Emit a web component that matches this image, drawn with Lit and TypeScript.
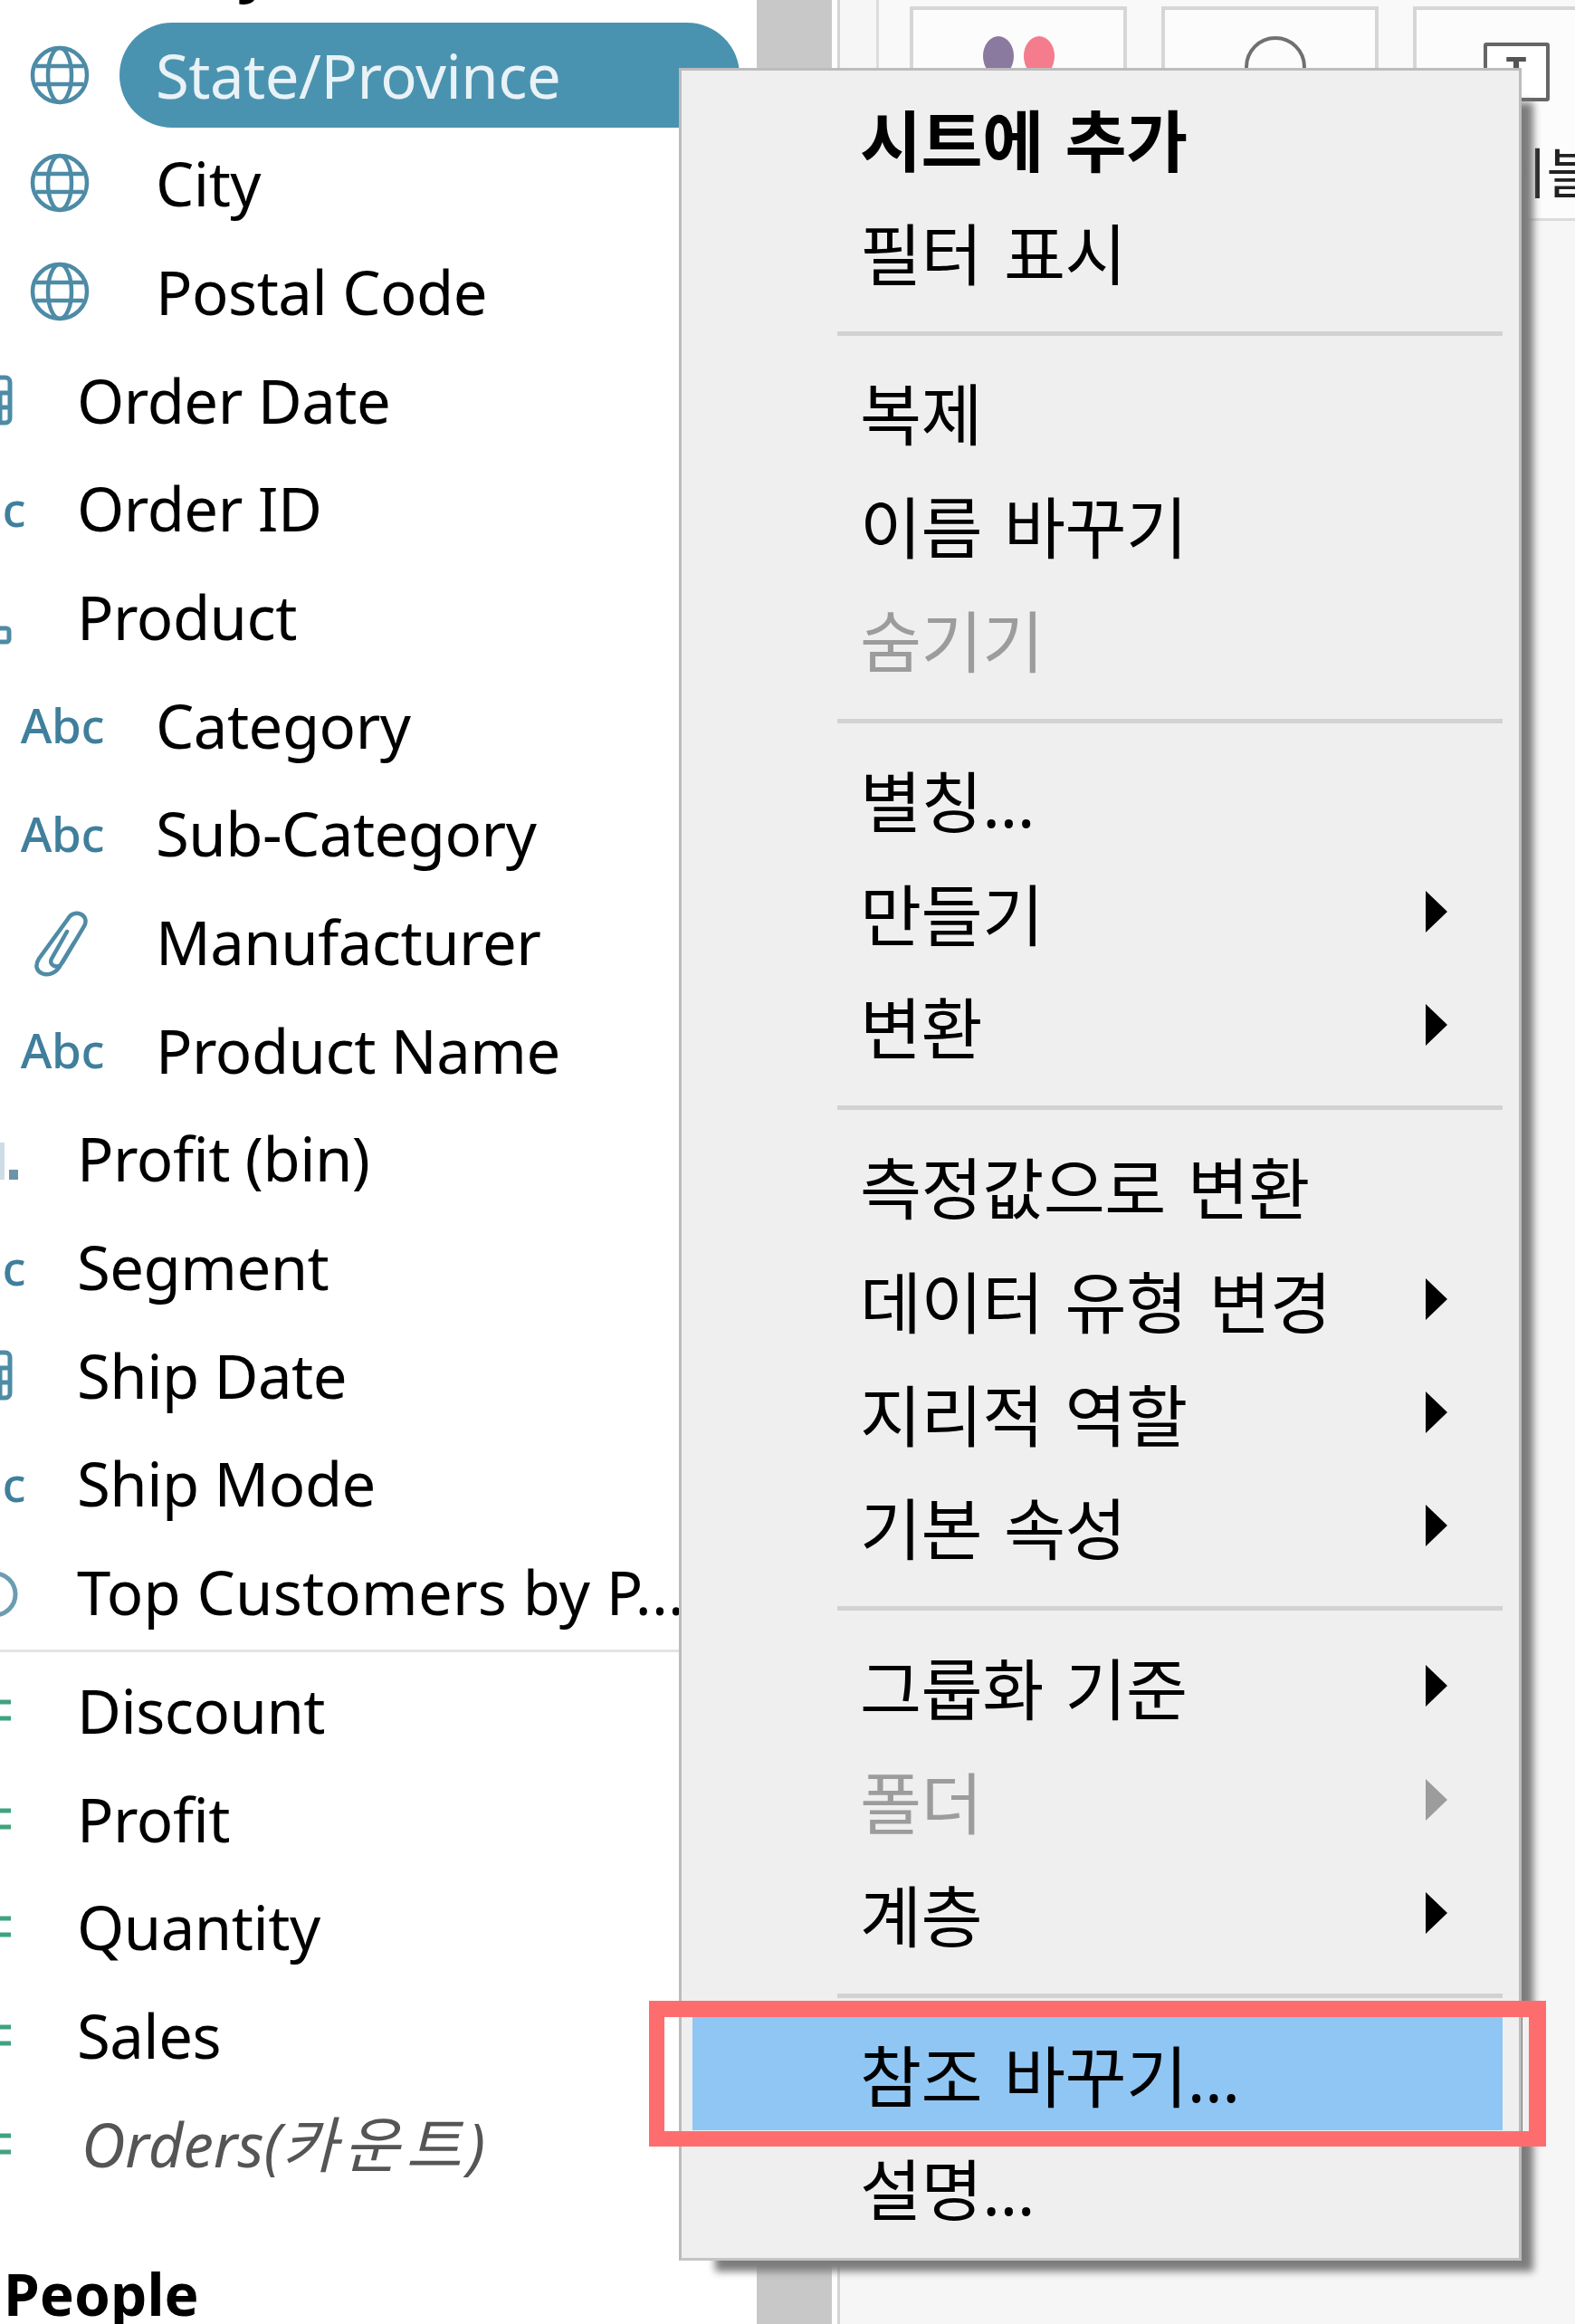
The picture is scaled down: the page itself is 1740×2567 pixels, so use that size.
import { LitElement, html, css, svg } from "lit";
import { customElement } from "lit/decorators.js";

type Kind = "globe" | "abc" | "cal" | "hier" | "clip" | "bin" | "set" | "num";
interface Row { t: string; k: Kind; child?: boolean; sel?: boolean; it?: boolean; cut?: boolean; wide?: boolean; }

const TOP: Row[] = [
  { t: "Country", k: "globe", cut: true },
  { t: "State/Province", k: "globe", child: true, sel: true },
  { t: "City", k: "globe", child: true },
  { t: "Postal Code", k: "globe", child: true },
  { t: "Order Date", k: "cal" },
  { t: "Order ID", k: "abc" },
  { t: "Product", k: "hier" },
  { t: "Category", k: "abc", child: true },
  { t: "Sub-Category", k: "abc", child: true },
  { t: "Manufacturer", k: "clip", child: true },
  { t: "Product Name", k: "abc", child: true },
  { t: "Profit (bin)", k: "bin" },
  { t: "Segment", k: "abc" },
  { t: "Ship Date", k: "cal" },
  { t: "Ship Mode", k: "abc" },
  { t: "Top Customers by P...", k: "set", wide: true },
];
const MEASURES: Row[] = [
  { t: "Discount", k: "num" },
  { t: "Profit", k: "num" },
  { t: "Quantity", k: "num" },
  { t: "Sales", k: "num" },
  { t: "Orders(카운트)", k: "num", it: true },
];

interface Item { t: string; bold?: boolean; off?: boolean; sub?: boolean; hot?: boolean; }
const MENU: Item[][] = [
  [{ t: "시트에 추가", bold: true }, { t: "필터 표시" }],
  [{ t: "복제" }, { t: "이름 바꾸기" }, { t: "숨기기", off: true }],
  [{ t: "별칭..." }, { t: "만들기", sub: true }, { t: "변환", sub: true }],
  [{ t: "측정값으로 변환" }, { t: "데이터 유형 변경", sub: true }, { t: "지리적 역할", sub: true }, { t: "기본 속성", sub: true }],
  [{ t: "그룹화 기준", sub: true }, { t: "폴더", off: true, sub: true }, { t: "계층", sub: true }],
  [{ t: "참조 바꾸기...", hot: true }, { t: "설명..." }],
];

const icon = (k: Kind) => {
  if (k === "abc") return html`<span class="abc">Abc</span>`;
  const body = {
    globe: svg`<g fill="none" stroke="#4d8ba6" stroke-width="4.5">
      <ellipse cx="33" cy="33" rx="30" ry="30"/><ellipse cx="33" cy="33" rx="13" ry="30"/>
      <path d="M7 23H59M7 43H59"/></g>`,
    cal: svg`<g fill="none" stroke="#4d8ba6" stroke-width="5">
      <rect x="14" y="8" width="51" height="50" rx="5"/><path d="M14 25H65M14 41H65M32 25V58M54 25V58"/></g>`,
    hier: svg`<g fill="none" stroke="#4d8ba6" stroke-width="5">
      <rect x="4" y="4" width="22" height="16"/><path d="M15 20V54H48"/><rect x="48" y="46" width="16" height="15" rx="3"/></g>`,
    clip: svg`<path fill="none" stroke="#4f8ba5" stroke-width="4.5" stroke-linecap="round" d="M41 22 L24 52 C20 60 32 64 36 56 L60 16 C67 3 48 -4 42 8 L10 52 C0 68 22 76 32 62 L49 34"/>`,
    bin: svg`<path fill="#cddde5" d="M54 16h5v41h-5z"/><path fill="#6c94a8" d="M64 46h10v11H64z"/><path fill="#8fb0c0" d="M14 40h10v17H14zM28 26h10v31H28zM42 16h8v41h-8z"/>`,
    set: svg`<g fill="none" stroke="#6c9cb2" stroke-width="5"><circle cx="24" cy="36" r="23"/><circle cx="48" cy="36" r="23"/></g>`,
    num: svg`<path fill="none" stroke="#3fa37e" stroke-width="5" d="M4 24H66M4 42H66M26 10L20 56M46 10L40 56"/>`,
  }[k];
  return html`<svg class="ico" viewBox="0 0 66 66" width="66" height="66">${body}</svg>`;
};

@customElement("app-root")
export class AppRoot extends LitElement {
  static styles = css`
    :host { display: block; width: 1740px; height: 2567px; position: relative; overflow: hidden; background: #fff; filter: blur(0.7px);
      font-family: "Noto Sans", "Noto Sans CJK KR", sans-serif; color: #000; }
    .shell { display: flex; height: 100%; }
    .fields { width: 836px; flex: none; overflow: hidden; }
    .list { margin-top: -97px; }
    .row { height: 119.7px; display: flex; align-items: center; font-size: 67px; letter-spacing: -0.5px; white-space: nowrap; }
    .parent { margin-left: -87px; }
    .cell { width: 132px; flex: none; display: flex; justify-content: center; align-items: center; }
    .ico { display: block; flex: none; overflow: visible; }
    .abc { font-size: 53px; font-weight: 500; color: #3f7f9c; letter-spacing: -0.4px; margin-left: 6px; }
    .label { flex: 1; min-width: 0; height: 116px; line-height: 116px; margin-right: 19px; padding-left: 40px; }
    .sel { background: #4a93b0; color: #e9f2f6; border-radius: 58px; }
    .it { font-style: italic; color: #555; padding-left: 45px; letter-spacing: 0; }
    .it span { letter-spacing: 7px; }
    .cut { font-weight: 700; letter-spacing: -9px; }
    .wide { letter-spacing: 0.2px; }
    .rule { height: 11px; display: flex; align-items: center; }
    .rule i { display: block; width: 100%; height: 3px; background: #e4e4e4; }
    .people { margin-top: 47px; height: 120px; line-height: 120px; padding-left: 4px; font-size: 64px; font-weight: 700; color: #000; }
    .scroll { width: 83px; flex: none; background: #c8c8c8; }
    .gap { width: 6px; flex: none; background: #fff; }
    .main { flex: 1; min-width: 0; background: #f6f6f6; border-left: 3px solid #d4d4d4; }
    .marks { height: 244px; box-sizing: border-box; background: #f9f9f9; border-bottom: 3px solid #dcdcdc; margin-left: 40px; border-left: 3px solid #dcdcdc;
      display: flex; gap: 38px; padding: 7px 0 0 34px; overflow: hidden; }
    .card { width: 240px; flex: none; box-sizing: border-box; border: 4px solid #d6d6d6; border-bottom: 0; background: #fcfcfc; display: flex; flex-direction: column; align-items: center; }
    .card .pic { height: 145px; width: 100%; display: flex; justify-content: center; gap: 11px; padding-top: 29px; box-sizing: border-box; }
    .card span { font-size: 60px; line-height: 70px; color: #222; white-space: nowrap; }
    .dot { width: 34px; height: 44px; border-radius: 50%; }
    .d1 { background: #8a7aa0; }
    .d2 { background: #f47c8c; }
    .ring { width: 68px; height: 68px; margin-left: 12px; border: 4px solid #707070; border-radius: 50%; box-sizing: border-box; }
    .tbox { width: 73px; height: 65px; margin: 7px 12px 0 0; box-sizing: border-box; border: 4px solid #666; border-radius: 3px; background: #fff; font-size: 40px; line-height: 50px; text-align: center; font-weight: 700; color: #555; }
    .shadow { position: absolute; left: 790px; top: 113px; width: 904px; height: 2396px; background: #7c7c7c; filter: blur(4px); }
    .menu { position: absolute; left: 750px; top: 75px; width: 931px; height: 2422px; box-sizing: border-box; background: #efefef; border: 3px solid #bcbcbc; border-bottom-color: #c4c4c4; padding-top: 11px; }
    .item { height: 125.4px; margin: 0 18px 0 12px; padding-left: 185px; display: flex; align-items: center; justify-content: space-between; font-size: 74px; letter-spacing: -0.5px; word-spacing: 5px; color: #000; white-space: nowrap; }
    .bold { font-weight: 700; }
    .off { color: #9c9c9c; }
    .hot { background: #90c6f4; }
    .arrow { width: 24px; height: 46px; margin-right: 61px; fill: currentColor; }
    .sep { height: 51.5px; box-sizing: border-box; padding-top: 6px; margin: 0 18px 0 172px; display: flex; align-items: center; }
    .sep i { display: block; width: 100%; height: 5px; background: #d2d2d2; }
    .mark { position: absolute; left: 717px; top: 2210px; width: 991px; height: 161px; box-sizing: border-box; border: solid #fe6d6e; border-width: 18px 19px 17px 17px; }
    .mark i { position: absolute; right: 0; top: 0; bottom: 0; width: 7px; background: #f2f2f2; }
  `;

  private row(r: Row) {
    const cls = `row ${r.child ? "" : "parent"} ${r.wide ? "wide" : ""} ${r.cut ? "cut" : ""}`;
    const text = r.it ? html`Orders(<span>카운트</span>)` : r.t;
    return html`<div class=${cls}>
      <div class="cell">${icon(r.k)}</div>
      <div class="label ${r.sel ? "sel" : ""} ${r.it ? "it" : ""}">${text}</div>
    </div>`;
  }

  render() {
    return html`
      <div class="shell">
        <div class="fields">
          <div class="list">
            ${TOP.map((r) => this.row(r))}
            <div class="rule"><i></i></div>
            ${MEASURES.map((r) => this.row(r))}
            <div class="people">People</div>
          </div>
        </div>
        <div class="scroll"></div>
        <div class="gap"></div>
        <div class="main">
          <div class="marks">
            <div class="card"><div class="pic"><div class="dot d1"></div><div class="dot d2"></div></div><span>색상</span></div>
            <div class="card"><div class="pic"><div class="ring"></div></div><span>크기</span></div>
            <div class="card"><div class="pic"><div class="tbox">T</div></div><span>레이블</span></div>
          </div>
        </div>
      </div>
      <div class="shadow"></div>
      <div class="menu">
        ${MENU.map((g, i) => html`
          ${i ? html`<div class="sep"><i></i></div>` : ""}
          ${g.map((m) => html`<div class="item ${m.bold ? "bold" : ""} ${m.off ? "off" : ""} ${m.hot ? "hot" : ""}">
            <span>${m.t}</span>
            ${m.sub ? html`<svg class="arrow" viewBox="0 0 24 46"><path d="M0 0L24 23L0 46Z"/></svg>` : ""}
          </div>`)}
        `)}
      </div>
      <div class="mark"><i></i></div>
    `;
  }
}
